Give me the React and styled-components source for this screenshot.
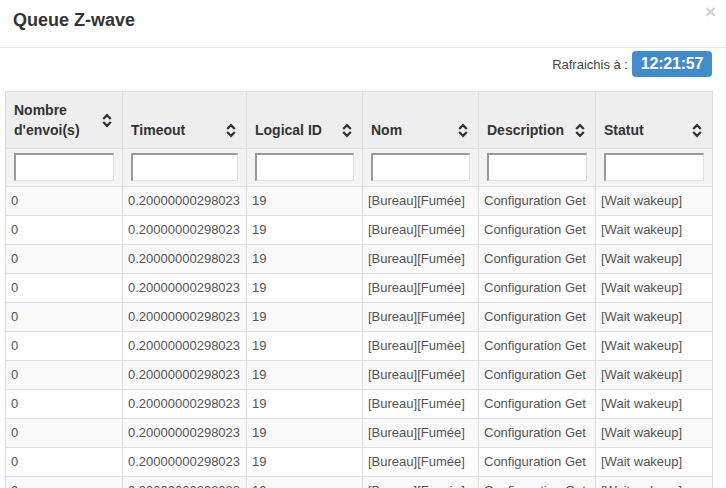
import React from "react";
import styled, { createGlobalStyle } from "styled-components";

const Global = createGlobalStyle`
  html, body { margin: 0; padding: 0; background: #fff; }
  body { font-family: "Liberation Sans", Arial, sans-serif; color: #555; overflow: hidden; }
  * { box-sizing: border-box; }
`;

const Page = styled.div`
  width: 726px;
  height: 488px;
  overflow: hidden;
  background: #fff;
`;

const Header = styled.div`
  height: 48px;
  border-bottom: 1px solid #e5e5e5;
  display: flex;
  align-items: flex-start;
  justify-content: space-between;
  padding: 0 10px 0 13px;
`;

const Title = styled.h4`
  margin: 0;
  padding-top: 10px;
  font-size: 18px;
  line-height: 20px;
  font-weight: bold;
  color: #333;
`;

const Close = styled.span`
  margin-top: 3px;
  font-size: 19px;
  line-height: 17px;
  font-weight: bold;
  color: #d0d0d0;
`;

const Body = styled.div`
  padding: 3px 14px 0 5px;
`;

const RefreshRow = styled.div`
  display: flex;
  justify-content: flex-end;
  align-items: center;
  gap: 4px;
  height: 26px;
  margin-bottom: 14px;
`;

const RefreshLabel = styled.span`
  font-size: 13px;
  color: #444;
`;

const Badge = styled.span`
  display: inline-flex;
  align-items: center;
  justify-content: center;
  width: 80px;
  height: 26px;
  border-radius: 4px;
  background: #428bca;
  color: #fff;
  font-weight: bold;
  font-size: 16px;
  letter-spacing: -0.2px;
`;

const Table = styled.table`
  border-collapse: collapse;
  table-layout: fixed;
  width: 708px;
  font-size: 13px;
`;

const Th = styled.th`
  background: #eeeeee;
  border: 1px solid #dddddd;
  padding: 8px 10px 8px 8px;
  vertical-align: bottom;
  text-align: left;
  font-size: 14px;
  line-height: 20px;
  font-weight: bold;
  color: #333;
`;

const ThInner = styled.div`
  display: flex;
  align-items: center;
  justify-content: space-between;
  gap: 6px;
`;

const FilterTd = styled.td`
  background: #f3f3f3;
  border: 1px solid #dddddd;
  padding: 4px 8px 5px 8px;
  height: 38px;
`;

const FilterInput = styled.input`
  display: block;
  width: 100%;
  height: 28px;
  margin: 0;
  padding: 2px;
  border-top: 2px solid #9a9a9a;
  border-left: 2px solid #9a9a9a;
  border-right: 1px solid #e0e0e0;
  border-bottom: 1px solid #e0e0e0;
  background: #fff;
  outline: none;
`;

const Row = styled.tr`
  background: ${(p) => (p.$odd ? "#f9f9f9" : "#ffffff")};
`;

const Td = styled.td`
  border: 1px solid #dddddd;
  padding: 5px 5px;
  line-height: 18px;
  height: 29px;
  white-space: nowrap;
  overflow: hidden;
  color: #555;
`;

const SortIcon = () => (
  <svg width="10" height="15" viewBox="0 0 10 15" style={{ flex: "none" }}>
    <path d="M1.2 6 L5 2.2 L8.8 6" fill="none" stroke="#333" strokeWidth="2.3" />
    <path d="M1.2 9 L5 12.8 L8.8 9" fill="none" stroke="#333" strokeWidth="2.3" />
  </svg>
);

const columns = [
  { label: "Nombre d'envoi(s)", w: 117 },
  { label: "Timeout", w: 124 },
  { label: "Logical ID", w: 116 },
  { label: "Nom", w: 116 },
  { label: "Description", w: 117 },
  { label: "Statut", w: 117 },
];

const rows = Array.from({ length: 11 }, () => [
  "0",
  "0.20000000298023",
  "19",
  "[Bureau][Fumée]",
  "Configuration Get",
  "[Wait wakeup]",
]);

export default function App() {
  return (
    <Page>
      <Global />
      <Header>
        <Title>Queue Z-wave</Title>
        <Close>×</Close>
      </Header>
      <Body>
        <RefreshRow>
          <RefreshLabel>Rafraichis à :</RefreshLabel>
          <Badge>12:21:57</Badge>
        </RefreshRow>
        <Table>
          <colgroup>
            {columns.map((c) => (
              <col key={c.label} style={{ width: c.w }} />
            ))}
          </colgroup>
          <thead>
            <tr>
              {columns.map((c) => (
                <Th key={c.label}>
                  <ThInner>
                    <span>{c.label}</span>
                    <SortIcon />
                  </ThInner>
                </Th>
              ))}
            </tr>
            <tr>
              {columns.map((c) => (
                <FilterTd key={c.label}>
                  <FilterInput type="text" />
                </FilterTd>
              ))}
            </tr>
          </thead>
          <tbody>
            {rows.map((r, i) => (
              <Row key={i} $odd={i % 2 === 0}>
                {r.map((v, j) => (
                  <Td key={j}>{v}</Td>
                ))}
              </Row>
            ))}
          </tbody>
        </Table>
      </Body>
    </Page>
  );
}
